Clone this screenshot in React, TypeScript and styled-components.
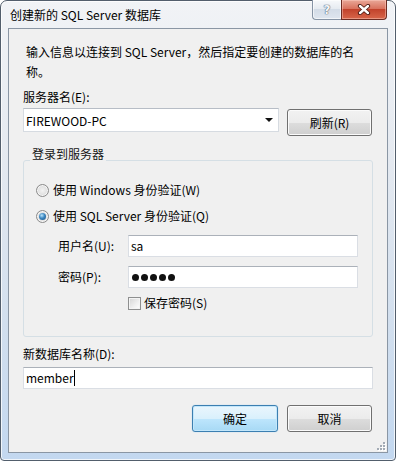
import React from 'react';
import styled, { createGlobalStyle, css } from 'styled-components';

const GlobalStyle = createGlobalStyle`
  html, body {
    margin: 0;
    padding: 0;
    background: #ffffff;
  }
  body {
    font-family: 'Noto Sans CJK SC', 'Noto Sans', sans-serif;
    font-size: 12px;
    color: #000;
  }
  * {
    box-sizing: border-box;
  }
`;

const Window = styled.div`
  width: 396px;
  height: 461px;
  display: flex;
  flex-direction: column;
  padding: 0 7px 7px;
  border: 1px solid #525e6c;
  border-radius: 7px 7px 4px 4px;
  background: linear-gradient(180deg, #f1f3f6 0%, #e4e9f0 35%, #d2dfee 70%, #c3d8f0 100%);
  box-shadow: inset 0 0 0 1px rgba(255, 255, 255, 0.75);
`;

const TitleBar = styled.div`
  height: 27px;
  display: flex;
  align-items: flex-start;
`;

const Title = styled.div`
  margin: 6px 0 0 2px;
  line-height: 16px;
  color: #000;
`;

const CaptionButtons = styled.div`
  margin: -1px 1px 0 auto;
  display: flex;
`;

const CaptionButton = styled.div<{ $kind: 'help' | 'close' }>`
  height: 20px;
  display: flex;
  align-items: center;
  justify-content: center;
  border: 1px solid;
  border-top: none;
  ${p =>
    p.$kind === 'help'
      ? css`
          width: 29px;
          border-color: #8694a5;
          border-right: none;
          border-radius: 0 0 0 4px;
          background: linear-gradient(180deg, #f7f9fb 0%, #e6ebf1 45%, #d3dce7 50%, #dfe6ef 100%);
          box-shadow: inset 0 0 0 1px rgba(255, 255, 255, 0.6);
        `
      : css`
          width: 46px;
          border-color: #6d2c22;
          border-radius: 0 0 4px 0;
          background: linear-gradient(180deg, #e9a898 0%, #d9735f 45%, #c2432c 50%, #d8664a 100%);
          box-shadow: inset 0 0 0 1px rgba(255, 210, 200, 0.45);
        `}
`;

const HelpGlyph = styled.span`
  font-family: 'DejaVu Sans', sans-serif;
  font-size: 12px;
  font-weight: bold;
  line-height: 1;
  color: #f4f6f9;
  text-shadow: 0 0 1px #5c6b7d, 0 0 1px #5c6b7d, 0 0 1px #5c6b7d;
`;

const Client = styled.div`
  flex: 1;
  position: relative;
  display: flex;
  flex-direction: column;
  padding: 0 14px 0 14px;
  border: 1px solid #8a96a4;
  background: #f0f0f0;
`;

const Intro = styled.div`
  margin: 13px 0 0 3px;
  line-height: 20px;
`;

const FieldLabel = styled.div<{ $top: number }>`
  margin-top: ${p => p.$top}px;
  line-height: 20px;
`;

const ServerRow = styled.div`
  margin-top: 1px;
  display: flex;
  align-items: flex-start;
  gap: 8px;
`;

const Combo = styled.div`
  width: 256px;
  height: 24px;
  display: flex;
  align-items: center;
  justify-content: space-between;
  padding: 0 5px 0 2px;
  background: #fff;
  border: 1px solid #d6dbe1;
  border-top-color: #b7bdc6;
`;

const ComboArrow = styled.span`
  width: 0;
  height: 0;
  border-left: 4px solid transparent;
  border-right: 4px solid transparent;
  border-top: 4px solid #111;
`;

const PushButton = styled.div<{ $width: number; $default?: boolean }>`
  width: ${p => p.$width}px;
  height: 27px;
  display: flex;
  align-items: center;
  justify-content: center;
  border-radius: 3px;
  line-height: 16px;
  ${p =>
    p.$default
      ? css`
          border: 1px solid #3c7fb1;
          background: linear-gradient(180deg, #eaf6fd 0%, #d9f0fc 50%, #bee6fd 50%, #a7d9f5 100%);
          box-shadow: inset 0 0 0 1px #c3e7fb, 0 0 1px #7fc4ee;
        `
      : css`
          border: 1px solid #707070;
          background: linear-gradient(180deg, #f2f2f2 0%, #ebebeb 50%, #dddddd 50%, #cfcfcf 100%);
          box-shadow: inset 0 0 0 1px #fbfbfb;
        `}
`;

const RefreshButton = styled(PushButton)`
  margin-top: 1px;
`;

const GroupBox = styled.fieldset`
  width: 350px;
  margin: 10px 0 0;
  padding: 6px 0 23px;
  border: 1px solid #d5dfe5;
  border-radius: 3px;
  display: flex;
  flex-direction: column;
  min-inline-size: 0;
`;

const GroupLegend = styled.legend`
  margin-left: 6px;
  padding: 0 2px 12px;
  line-height: 16px;
  color: #151515;
`;

const OptionRow = styled.div<{ $top: number }>`
  margin: ${p => p.$top}px 0 0 12px;
  display: flex;
  align-items: center;
  gap: 4px;
  line-height: 20px;
`;

const Radio = styled.span<{ $checked?: boolean }>`
  position: relative;
  width: 13px;
  height: 13px;
  border-radius: 50%;
  border: 1px solid #8b8b8b;
  background: radial-gradient(circle at 50% 50%, #f3f3f3 0%, #e1e1e1 55%, #c9c9c9 100%);
  box-shadow: inset 0 0 0 1px #f6f6f6;
  ${p =>
    p.$checked &&
    css`
      &::after {
        content: '';
        position: absolute;
        left: 2px;
        top: 2px;
        width: 7px;
        height: 7px;
        border-radius: 50%;
        background: radial-gradient(circle at 40% 35%, #b9e4fb 0%, #3b86c0 45%, #1c4f7e 100%);
      }
    `}
`;

const FieldRow = styled.div`
  margin: 9px 0 0 34px;
  display: flex;
  align-items: center;
`;

const RowLabel = styled.span`
  width: 70px;
  line-height: 20px;
`;

const TextBox = styled.div<{ $width: number }>`
  width: ${p => p.$width}px;
  height: 22px;
  display: flex;
  align-items: center;
  padding-left: 2px;
  background: #fff;
  border: 1px solid #dadee4;
  border-top-color: #abb1b9;
  line-height: 16px;
`;

const MemberBox = styled(TextBox)`
  margin-top: 3px;
`;

const Caret = styled.span`
  width: 1px;
  height: 16px;
  background: #000;
`;

const Dot = styled.span`
  width: 7px;
  height: 7px;
  margin-right: 1px;
  margin-left: 1px;
  border-radius: 50%;
  background: #111;
`;

const CheckRow = styled.div`
  margin: 5px 0 0 104px;
  display: flex;
  align-items: center;
  gap: 3px;
  line-height: 20px;
`;

const CheckBox = styled.span`
  width: 13px;
  height: 13px;
  border: 1px solid #8e8f8f;
  background: linear-gradient(135deg, #d4d4d4 0%, #f0f0f0 60%, #ffffff 100%);
  box-shadow: inset 0 0 0 1px #f4f4f4;
`;

const ButtonRow = styled.div`
  margin-top: 16px;
  padding-right: 1px;
  display: flex;
  justify-content: flex-end;
  gap: 9px;
`;

const SizeGrip = styled.svg`
  position: absolute;
  right: 1px;
  bottom: 1px;
`;

const CloseGlyph = () => (
  <svg width="14" height="11" viewBox="0 0 14 11">
    <path d="M3 2 L11 9 M11 2 L3 9" stroke="#4a1a12" strokeWidth="4.2" strokeLinecap="round" />
    <path d="M3 2 L11 9 M11 2 L3 9" stroke="#ffffff" strokeWidth="2.4" strokeLinecap="round" />
  </svg>
);

const Grip = () => {
  const pts = [
    [8, 2],
    [5, 5],
    [8, 5],
    [2, 8],
    [5, 8],
    [8, 8],
  ];
  return (
    <SizeGrip width="11" height="11" viewBox="0 0 11 11">
      {pts.map(([x, y]) => (
        <g key={`${x}-${y}`}>
          <rect x={x + 1} y={y + 1} width="2" height="2" fill="#ffffff" />
          <rect x={x} y={y} width="2" height="2" fill="#a3abb5" />
        </g>
      ))}
    </SizeGrip>
  );
};

const App = () => {
  return (
    <>
      <GlobalStyle />
      <Window>
        <TitleBar>
          <Title>创建新的 SQL Server 数据库</Title>
          <CaptionButtons>
            <CaptionButton $kind="help">
              <HelpGlyph>?</HelpGlyph>
            </CaptionButton>
            <CaptionButton $kind="close">
              <CloseGlyph />
            </CaptionButton>
          </CaptionButtons>
        </TitleBar>
        <Client>
          <Intro>
            输入信息以连接到 SQL Server，然后指定要创建的数据库的名
            <br />
            称。
          </Intro>
          <FieldLabel $top={5}>服务器名(E):</FieldLabel>
          <ServerRow>
            <Combo>
              <span>FIREWOOD-PC</span>
              <ComboArrow />
            </Combo>
            <RefreshButton $width={85}>刷新(R)</RefreshButton>
          </ServerRow>
          <GroupBox>
            <GroupLegend>登录到服务器</GroupLegend>
            <OptionRow $top={0}>
              <Radio />
              <span>使用 Windows 身份验证(W)</span>
            </OptionRow>
            <OptionRow $top={6}>
              <Radio $checked />
              <span>使用 SQL Server 身份验证(Q)</span>
            </OptionRow>
            <FieldRow>
              <RowLabel>用户名(U):</RowLabel>
              <TextBox $width={230}>sa</TextBox>
            </FieldRow>
            <FieldRow>
              <RowLabel>密码(P):</RowLabel>
              <TextBox $width={230}>
                <Dot />
                <Dot />
                <Dot />
                <Dot />
                <Dot />
              </TextBox>
            </FieldRow>
            <CheckRow>
              <CheckBox />
              <span>保存密码(S)</span>
            </CheckRow>
          </GroupBox>
          <FieldLabel $top={7}>新数据库名称(D):</FieldLabel>
          <MemberBox $width={350}>
            member
            <Caret />
          </MemberBox>
          <ButtonRow>
            <PushButton $width={86} $default>
              确定
            </PushButton>
            <PushButton $width={85}>取消</PushButton>
          </ButtonRow>
          <Grip />
        </Client>
      </Window>
    </>
  );
};

export default App;
